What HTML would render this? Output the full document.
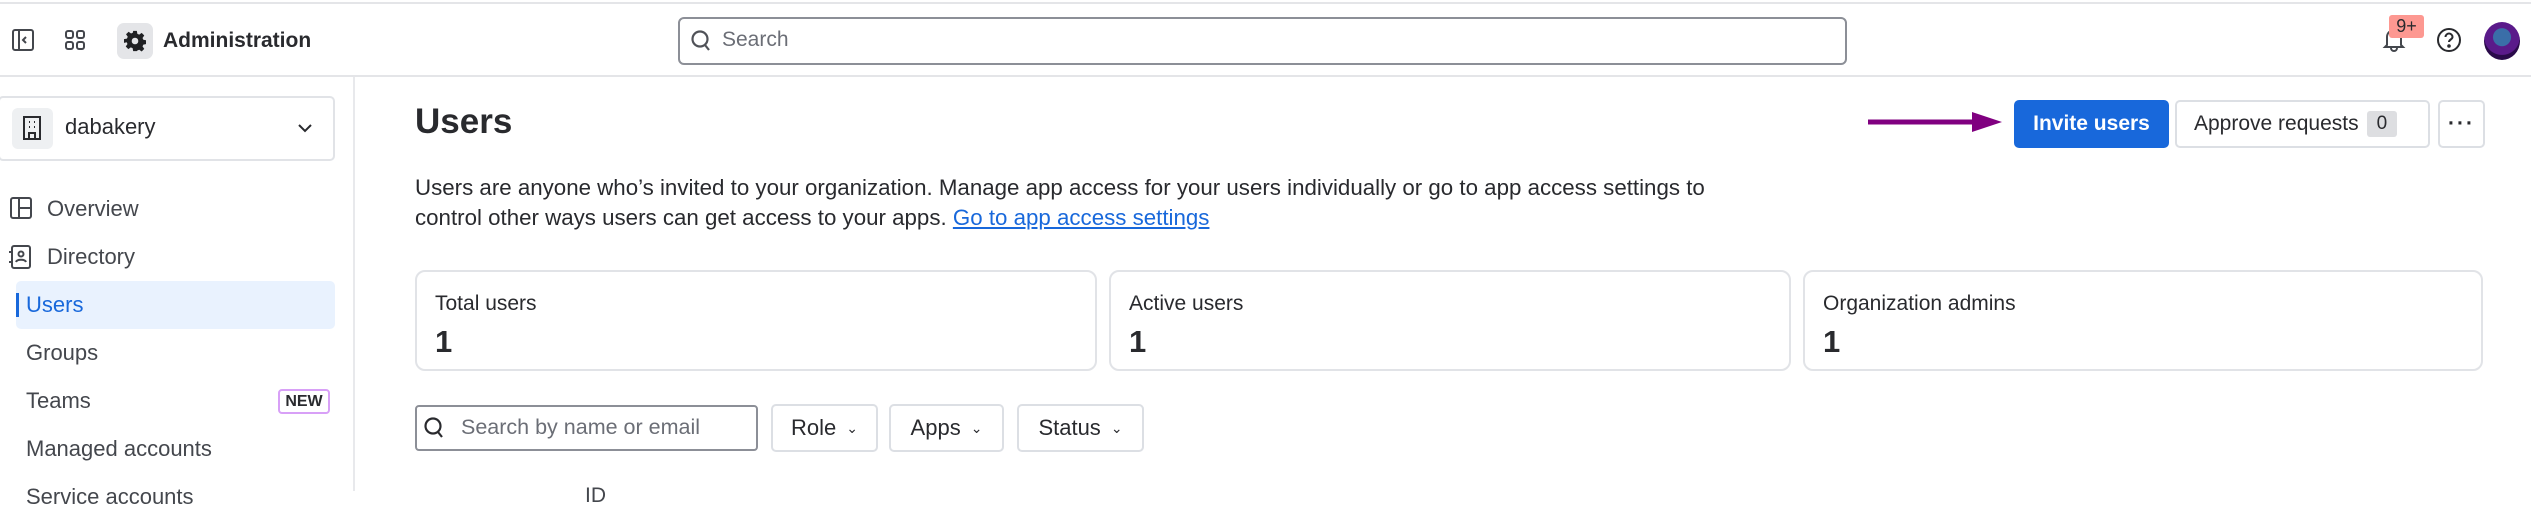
<!DOCTYPE html>
<html><head><meta charset="utf-8"><style>
*{box-sizing:border-box;margin:0;padding:0}
body{width:2531px;height:491px;overflow:hidden;background:#fff;font-family:"Liberation Sans",sans-serif;color:#292a2e;position:relative}
.a{position:absolute}
.t{white-space:nowrap}
.btn{position:absolute;border:2px solid #dcdfe4;border-radius:5px;background:#fff;display:flex;align-items:center;justify-content:center;font-size:21px;color:#292a2e}
.card{position:absolute;top:270px;height:101px;border:2px solid #e1e3e7;border-radius:10px}
.card .l{position:absolute;left:18px;top:20px;font-size:21px;color:#292a2e}
.card .v{position:absolute;left:18px;top:52px;font-size:31px;font-weight:bold}
.nav{position:absolute;font-size:22px;color:#44474d}
</style></head><body>
<div class="a" style="left:0;top:2px;width:2531px;height:2px;background:#e4e5e8"></div>
<div class="a" style="left:0;top:75px;width:2531px;height:2px;background:#e4e5e8"></div>
<div class="a" style="left:353px;top:77px;width:2px;height:414px;background:#e8e9ec"></div>

<svg class="a" style="left:11px;top:28px" width="24" height="24" viewBox="0 0 24 24" fill="none" stroke="#44474d" stroke-width="2"><rect x="2" y="2" width="20" height="20" rx="2"/><line x1="8" y1="2" x2="8" y2="22"/><path d="M15 9l-3 3 3 3"/></svg>
<svg class="a" style="left:63px;top:28px" width="24" height="24" viewBox="0 0 24 24" fill="none" stroke="#44474d" stroke-width="2"><rect x="3" y="3" width="7" height="7" rx="2"/><rect x="14" y="3" width="7" height="7" rx="2"/><rect x="3" y="14" width="7" height="7" rx="2"/><rect x="14" y="14" width="7" height="7" rx="2"/></svg>
<div class="a" style="left:117px;top:23px;width:36px;height:36px;border-radius:7px;background:#e4e5e8"></div>
<svg class="a" style="left:124px;top:30px" width="22" height="22" viewBox="0 0 24 24"><path fill="#1f2023" d="M10 1h4l.6 3.2 2 .9 2.7-1.9 2.8 2.8-1.9 2.7.9 2 3.2.6v4l-3.2.6-.9 2 1.9 2.7-2.8 2.8-2.7-1.9-2 .9L14 23h-4l-.6-3.2-2-.9-2.7 1.9-2.8-2.8 1.9-2.7-.9-2L0 14v-4l3.2-.6.9-2-1.9-2.7 2.8-2.8 2.7 1.9 2-.9z"/><circle cx="12" cy="12" r="3.6" fill="#e4e5e8"/></svg>
<div class="a t" style="left:163px;top:29px;font-size:21px;font-weight:bold;color:#292a2e">Administration</div>

<div class="a" style="left:678px;top:17px;width:1169px;height:48px;border:2px solid #8c8f97;border-radius:6px"></div>
<svg class="a" style="left:690px;top:29px" width="22" height="24" viewBox="0 0 22 24" fill="none" stroke="#505258" stroke-width="2.2"><circle cx="10" cy="10" r="7.5"/><line x1="15" y1="16" x2="19" y2="21"/></svg>
<div class="a t" style="left:722px;top:28px;font-size:21px;color:#6b6e76">Search</div>

<svg class="a" style="left:2382px;top:26px" width="24" height="26" viewBox="0 0 24 26" fill="none" stroke="#44474d" stroke-width="2"><path d="M5 19V11a7 7 0 0114 0v8l2 2H3z"/><path d="M9 22a3 3 0 006 0"/></svg>
<div class="a t" style="left:2389px;top:15px;width:35px;height:23px;background:#fd9891;border-radius:3px;font-size:18px;text-align:center;line-height:23px;color:#292a2e">9+</div>
<svg class="a" style="left:2436px;top:27px" width="26" height="26" viewBox="0 0 26 26" fill="none" stroke="#292a2e" stroke-width="2"><circle cx="13" cy="13" r="11"/><path d="M9.5 10a3.5 3.5 0 117 0c0 2.5-3.5 2.5-3.5 5"/><circle cx="13" cy="19" r=".8" fill="#292a2e"/></svg>
<div class="a" style="left:2484px;top:22px;width:36px;height:38px;border-radius:50%;background:radial-gradient(circle at 50% 40%,#3a6ea8 0 30%,#5a1a8a 32% 60%,#2a0a4a 62%)"></div>

<div class="a" style="left:-2px;top:96px;width:337px;height:65px;border:2px solid #e1e3e7;border-radius:5px"></div>
<div class="a" style="left:12px;top:108px;width:41px;height:41px;border-radius:6px;background:#eef0f2"></div>
<svg class="a" style="left:21px;top:116px" width="22" height="24" viewBox="0 0 22 24" fill="none" stroke="#292a2e" stroke-width="2"><rect x="3" y="1" width="16" height="22"/><path d="M8 23v-6h6v6"/><path d="M8 6h1M13 6h1M8 11h1M13 11h1"/></svg>
<div class="a t" style="left:65px;top:114px;font-size:22px;color:#292a2e">dabakery</div>
<svg class="a" style="left:295px;top:120px" width="20" height="16" viewBox="0 0 20 16" fill="none" stroke="#292a2e" stroke-width="2"><path d="M4 5l6 6 6-6"/></svg>

<svg class="a" style="left:10px;top:197px" width="22" height="22" viewBox="0 0 22 22" fill="none" stroke="#44474d" stroke-width="2"><rect x="1" y="1" width="20" height="20" rx="2"/><line x1="9" y1="1" x2="9" y2="21"/><line x1="9" y1="11" x2="21" y2="11"/></svg>
<div class="nav t" style="left:47px;top:196px">Overview</div>
<svg class="a" style="left:8px;top:245px" width="24" height="24" viewBox="0 0 24 24" fill="none" stroke="#44474d" stroke-width="2"><rect x="4" y="1" width="18" height="22" rx="2"/><circle cx="13" cy="9" r="2.5"/><path d="M8 17c1-3 9-3 10 0"/><path d="M1 7h4M1 17h4"/></svg>
<div class="nav t" style="left:47px;top:244px">Directory</div>
<div class="a" style="left:16px;top:281px;width:319px;height:48px;background:#e9f2fe;border-radius:5px"></div>
<div class="a" style="left:16px;top:293px;width:3px;height:24px;background:#1868db"></div>
<div class="nav t" style="left:26px;top:292px;color:#1868db">Users</div>
<div class="nav t" style="left:26px;top:340px">Groups</div>
<div class="nav t" style="left:26px;top:388px">Teams</div>
<div class="a t" style="left:278px;top:389px;width:52px;height:25px;border:2px solid #d8a0f7;border-radius:4px;font-size:16px;font-weight:bold;text-align:center;line-height:21px;color:#292a2e">NEW</div>
<div class="nav t" style="left:26px;top:436px">Managed accounts</div>
<div class="nav t" style="left:26px;top:484px">Service accounts</div>

<div class="a t" style="left:415px;top:102px;font-size:35px;font-weight:bold;color:#292a2e">Users</div>
<svg class="a" style="left:1868px;top:112px" width="136" height="20" viewBox="0 0 136 20"><line x1="0" y1="10" x2="108" y2="10" stroke="#800080" stroke-width="5"/><path d="M104 0l30 10-30 10z" fill="#800080"/></svg>
<div class="btn" style="left:2014px;top:100px;width:155px;height:48px;background:#1868db;border-color:#1868db;color:#fff;font-weight:bold">Invite users</div>
<div class="btn" style="left:2175px;top:100px;width:255px;height:48px;justify-content:flex-start;padding-left:17px">Approve requests<span style="margin-left:8px;background:#dddee1;border-radius:3px;padding:2px 10px;font-size:19px">0</span></div>
<div class="btn" style="left:2438px;top:100px;width:47px;height:48px;font-weight:bold;letter-spacing:2px">···</div>

<div class="a t" style="left:415px;top:173px;font-size:22.3px;line-height:30px;color:#292a2e">Users are anyone who’s invited to your organization. Manage app access for your users individually or go to app access settings to<br>control other ways users can get access to your apps. <span style="color:#1868db;text-decoration:underline">Go to app access settings</span></div>

<div class="card" style="left:415px;width:682px"><div class="l">Total users</div><div class="v">1</div></div>
<div class="card" style="left:1109px;width:682px"><div class="l">Active users</div><div class="v">1</div></div>
<div class="card" style="left:1803px;width:680px"><div class="l">Organization admins</div><div class="v">1</div></div>

<div class="a" style="left:415px;top:405px;width:343px;height:46px;border:2px solid #8c8f97;border-radius:4px"></div>
<svg class="a" style="left:423px;top:416px" width="22" height="24" viewBox="0 0 22 24" fill="none" stroke="#292a2e" stroke-width="2.2"><circle cx="10" cy="10" r="7.5"/><line x1="15" y1="16" x2="19" y2="21"/></svg>
<div class="a t" style="left:461px;top:415px;font-size:21.5px;color:#6b6e76">Search by name or email</div>
<div class="btn" style="left:771px;top:404px;width:107px;height:48px;font-size:22px">Role<span style="margin-left:10px;font-size:14px">&#8964;</span></div>
<div class="btn" style="left:889px;top:404px;width:115px;height:48px;font-size:22px">Apps<span style="margin-left:10px;font-size:14px">&#8964;</span></div>
<div class="btn" style="left:1017px;top:404px;width:127px;height:48px;font-size:22px">Status<span style="margin-left:10px;font-size:14px">&#8964;</span></div>
<div class="a t" style="left:585px;top:484px;font-size:21px;color:#44474d">ID</div>
</body></html>
